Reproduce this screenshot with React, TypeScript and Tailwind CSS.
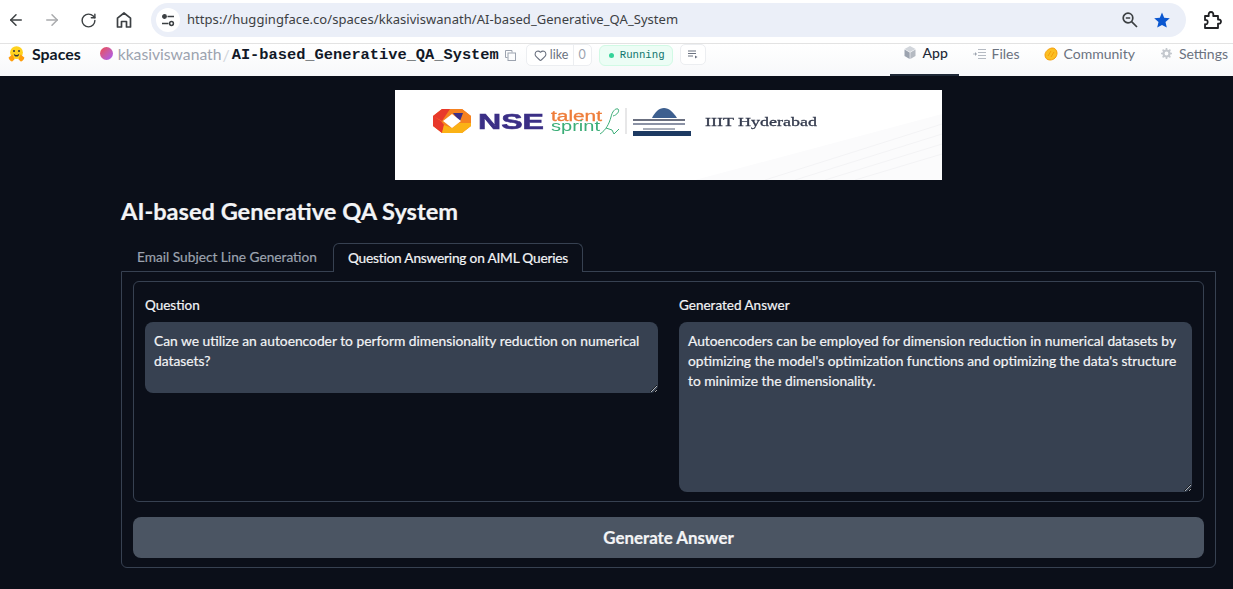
import React from "react";
import { ArrowLeft, ArrowRight, RotateCw, Heart } from "lucide-react";

const sans = "font-['Lato','Noto_Sans',sans-serif]";

function Home() {
  return (
    <svg width="18" height="18" viewBox="0 0 18 18" fill="none" stroke="#3c4043" strokeWidth="1.7">
      <path d="M2.5 16V7.2L9 2l6.5 5.2V16h-4v-5.500h-5V16z" strokeLinejoin="round" />
    </svg>
  );
}

function Tune() {
  return (
    <svg width="14" height="14" viewBox="0 0 14 14" fill="none" stroke="#3c4043" strokeWidth="1.5">
      <circle cx="3.500" cy="3.500" r="1.700" fill="#3c4043" />
      <path d="M6.500 3.500H13M1 10.500h6.500" />
      <circle cx="10.500" cy="10.500" r="1.900" />
    </svg>
  );
}

function HfLogo() {
  return (
    <svg width="17" height="17" viewBox="0 0 17 17">
      <circle cx="8.500" cy="7.600" r="6.400" fill="#ffd21e" />
      <circle cx="6" cy="6" r="1" fill="#32343d" />
      <circle cx="11" cy="6" r="1" fill="#32343d" />
      <path d="M5.800 8.800c1.500 1.600 3.900 1.600 5.400 0-.2 2-1.200 2.800-2.700 2.800s-2.500-.8-2.700-2.800z" fill="#32343d" />
      <path d="M.6 12.500l3.900-3 2.100 4.700-2.400 2.300c-1.300 0-3.400-2.100-3.600-4zM16.400 12.500l-3.900-3-2.100 4.700 2.400 2.300c1.300 0 3.400-2.100 3.600-4z" fill="#ff9d0b" />
    </svg>
  );
}

function Logo() {
  return (
    <svg width="547" height="90" viewBox="0 0 547 90" className="block blur-[0.35px]">
      <rect width="547" height="90" fill="#ffffff" />
      <path d="M300 90L547 24V90z" fill="#fbfbfc" />
      <path d="M400 90L547 44M430 90L547 54M460 90L547 64M370 90L547 34" stroke="#f3f3f5" strokeWidth="1" />
      <path d="M47 19h20l9 7v10l-9 7H47l-9-7V26z" fill="#f58220" />
      <path d="M38 26l9-7h8l-8 12z M38 26v10l9 7 2-8-3-4z" fill="#e8392b" />
      <path d="M57 19h10l9 7v3H62z" fill="#f58220" />
      <path d="M58 23h10l-3 8H64z" fill="#3b2f86" />
      <path d="M47 43h20l9-7v-3H64l-7 5-8-3z" fill="#fbb216" />
      <path d="M57 24l9 7-9 7-9-7z" fill="#ffffff" />
      <text x="83" y="39" fontFamily="'Liberation Sans',sans-serif" fontWeight="700" fontSize="22.500" stroke="#3b2f86" strokeWidth="0.6" fill="#3b2f86" textLength="66" lengthAdjust="spacingAndGlyphs">NSE</text>
      <text x="156" y="31" fontFamily="'Liberation Sans',sans-serif" fontSize="14" fill="#ee7d3a" stroke="#ee7d3a" strokeWidth="0.3" textLength="51" lengthAdjust="spacingAndGlyphs">talent</text>
      <text x="156" y="41" fontFamily="'Liberation Sans',sans-serif" fontSize="14" fill="#3cae78" textLength="49" lengthAdjust="spacingAndGlyphs">sprint</text>
      <path d="M205 44c6-4 9-10 11-17 1-5 4-9 7-8 2 2-1 6-5 7M211 38l6 2 2 4 5-5" fill="none" stroke="#3cae78" strokeWidth="1" />
      <path d="M231 18v26" stroke="#cfcfd1" strokeWidth="1" />
      <path d="M257 28c3-6 7-10 12-10s9 4 13 10z" fill="#3d5f8f" />
      <rect x="238" y="29" width="52" height="2" fill="#6b7080" />
      <rect x="238" y="33" width="52" height="2" fill="#8b92a5" />
      <rect x="248" y="38" width="32" height="2" fill="#a8adb9" />
      <rect x="238" y="41" width="58" height="5" fill="#1d3a62" />
      <text x="310" y="36" fontFamily="'Liberation Serif',serif" fontWeight="400" fontSize="13.500" stroke="#333a4d" strokeWidth="0.3" fill="#333a4d" textLength="112" lengthAdjust="spacingAndGlyphs">IIIT Hyderabad</text>
    </svg>
  );
}

function HfTab({ icon, label, active, className }: { icon: React.ReactNode; label: string; active?: boolean; className: string }) {
  return (
    <div className={`h-full flex items-center pb-[13px] ${active ? "border-b-2 border-[#1f2937] text-[#1f2937] font-medium" : "text-[#6b7280]"} ${className}`}>
      {icon}
      <span>{label}</span>
    </div>
  );
}

export default function App() {
  return (
    <div className={`w-[1233px] h-[589px] overflow-hidden flex flex-col bg-[#0b0f19] ${sans}`}>
      {/* browser bar */}
      <div className="h-[44px] shrink-0 bg-white border-b border-[#e3e3e3] flex items-center pb-[3px]">
        <div className="flex items-center w-[151px] pl-[7px] text-[#3c4043]">
          <ArrowLeft size={18} strokeWidth={2} />
          <ArrowRight size={18} strokeWidth={2} className="ml-[18px] text-[#a9abad]" />
          <RotateCw size={17} strokeWidth={2} className="ml-[19px]" />
          <span className="ml-[18px]"><Home /></span>
        </div>
        <div className="w-[1035px] h-[34px] rounded-full bg-[#ebeff8] flex items-center pl-[5px] pr-[15px]">
          <div className="w-[24px] h-[24px] rounded-full bg-white flex items-center justify-center mr-[7px]">
            <Tune />
          </div>
          <span className="text-[13px] tracking-[0.05px] text-[#3c4043] font-['Noto_Sans',sans-serif]">https://huggingface.co/spaces/kkasiviswanath/AI-based_Generative_QA_System</span>
          <div className="ml-auto flex items-center gap-[14px]">
            <svg width="18" height="18" viewBox="0 0 18 18" fill="none" stroke="#3c4043" strokeWidth="1.700">
              <circle cx="7" cy="7" r="4.800" />
              <path d="M4.800 7h4.400M10.600 10.600L16 16" />
            </svg>
            <svg width="18" height="18" viewBox="0 0 18 18"><path d="M9 1.500l2.200 5.200 5.600.5-4.300 3.700 1.300 5.500L9 13.900l-4.800 2.500 1.300-5.500L1.200 7.200l5.600-.5z" fill="#0b57d0" /></svg>
          </div>
        </div>
        <svg className="ml-[16px]" width="20" height="20" viewBox="0 0 20 20" fill="none" stroke="#202124" strokeWidth="1.800" strokeLinejoin="round">
          <path d="M3 6h3.800c-.6-2.600.5-4 2.200-4s2.800 1.400 2.200 4H16v3.600c2.200-.4 3 .8 3 2s-.8 2.400-3 2V18H3v-3.800c2 .4 2.700-.7 2.700-2.100S5 9.600 3 10z" />
        </svg>
      </div>

      {/* HF header */}
      <div className="h-[32px] shrink-0 bg-gradient-to-b from-white to-[#f7f8fa] flex items-start">
        <div className="ml-[8px] mt-[1px]"><HfLogo /></div>
        <span className="ml-[7px] h-[20px] leading-[20px] text-[15.9px] font-bold text-[#111827]">Spaces</span>
        <div className="ml-[19px] mt-[3px] w-[13px] h-[13px] rounded-full bg-gradient-to-br from-[#ef4444] to-[#a855f7]" />
        <span className="ml-[5px] h-[21px] leading-[21px] text-[15.700px] text-[#9ca3af]">kkasiviswanath</span>
        <span className="ml-[1px] h-[21px] leading-[21px] text-[16px] text-[#d1d5db]">/</span>
        <span className="ml-[2px] mt-[1px] h-[21px] leading-[21px] font-['Liberation_Mono',monospace] font-bold text-[15.350px] text-[#111827]">AI-based_Generative_QA_System</span>
        <svg className="ml-[6px] mt-[6px]" width="11" height="11" viewBox="0 0 11 11" fill="none" stroke="#9ca3af"><path d="M.5 .5h6.500v2M.5 .5v7h2" /><rect x="3" y="3" width="7.500" height="7.500" /></svg>
        <div className="ml-[10px] h-[22px] w-[66px] rounded-[5px] border border-[#eceef1] bg-white flex items-center text-[12.500px] text-[#6b7280]">
          <Heart size={13} className="ml-[7px]" />
          <span className="ml-[3px]">like</span>
          <span className="ml-auto h-full w-[18px] border-l border-[#eceef1] flex items-center justify-center text-[#9ca3af]">0</span>
        </div>
        <div className="ml-[7px] mt-[1px] h-[21px] w-[74px] rounded-[6px] border border-[#d1fae5] bg-[#ecfdf5] flex items-center font-['Liberation_Mono',monospace] text-[10.700px] text-[#0f766e]">
          <span className="ml-[9px] w-[5px] h-[5px] rounded-full bg-[#34d399]" />
          <span className="ml-[6px]">Running</span>
        </div>
        <div className="ml-[7px] h-[21px] w-[26px] rounded-[5px] border border-[#eceef1] bg-white flex items-center justify-center">
          <svg width="11" height="11" viewBox="0 0 11 11" fill="none" stroke="#6b7280" strokeWidth="1"><path d="M1 2h8M1 4.500h8M1 7h5" /><path d="M8 6.500l2.500 1.500L8 9.500z" fill="#6b7280" stroke="none" /></svg>
        </div>
        <div className="ml-auto h-full flex text-[14px]">
          <HfTab className="w-[69px] pl-[14px] gap-[7px]" active label="App" icon={<svg width="12" height="13" viewBox="0 0 12 13"><path d="M6 0l5.500 3L6 6 .5 3z" fill="#d1d5db" /><path d="M.5 3.500L5.700 6.500V13L.5 10z" fill="#9ca3af" /><path d="M11.500 3.500L6.300 6.500V13l5.200-3z" fill="#b5bac2" /></svg>} />
          <HfTab className="ml-[14px] gap-[6px]" label="Files" icon={<svg width="13" height="12" viewBox="0 0 13 12" fill="none" stroke="#b5bac2"><path d="M5 1.500h8M5 4.500h8M5 7.500h8M5 10.500h8" /><path d="M0 6h3" /><path d="M2 4l2 2-2 2z" fill="#9ca3af" stroke="none" /></svg>} />
          <HfTab className="ml-[24px] gap-[6px]" label="Community" icon={<svg width="14" height="14" viewBox="0 0 14 14"><path d="M1 8c0-3.500 3.500-6.500 7-7 2.500-.3 5 2 5 5 0 4-3 7-7 7-3 0-5-2-5-5z" fill="#fbbf24" stroke="#f59e0b" /><path d="M4 9l3-5M7 10l3-5" stroke="#f59e0b" /></svg>} />
          <HfTab className="ml-[26px] pr-[5px] gap-[7px]" label="Settings" icon={<svg width="11" height="11" viewBox="0 0 11 11"><circle cx="5.500" cy="5.500" r="3" fill="none" stroke="#c4c8ce" strokeWidth="2.200" /><path d="M5.500 0v2M5.500 9v2M0 5.500h2M9 5.500h2M1.600 1.600l1.400 1.400M8 8l1.400 1.400M9.400 1.600L8 3M3 8l-1.400 1.400" stroke="#c4c8ce" strokeWidth="1.600" /></svg>} />
        </div>
      </div>

      {/* main */}
      <div className="flex-1 flex flex-col pt-[14px] pl-[121px] pr-[17px] pb-[21px] text-[#f3f4f6] [-webkit-text-stroke:0.2px]">
        <div className="ml-[274px]"><Logo /></div>
        <h1 className="mt-[17px] h-[28px] leading-[28px] text-[23.600px] font-bold text-[#f3f4f6]">AI-based Generative QA System</h1>
        <div className="mt-[18px] h-[29px] flex text-[13.700px] relative z-10">
          <div className="w-[212px] h-[28px] leading-[28px] pl-[16px] text-[#9ca3af]">Email Subject Line Generation</div>
          <div className="w-[250px] h-[29px] leading-[28px] text-center tracking-[-0.2px] border border-b-0 border-[#374151] rounded-t-[6px] bg-[#0b0f19] text-[#f3f4f6]">Question Answering on AIML Queries</div>
        </div>
        <div className="-mt-[1px] flex-1 border border-[#374151] rounded-b-[6px] px-[11px] pt-[9px] pb-[9px] flex flex-col">
          <div className="h-[221px] shrink-0 border border-[#374151] rounded-[6px] px-[11px] pt-[14px] flex gap-[21px]">
            <label className="flex-1 block">
              <span className="block h-[18px] leading-[18px] text-[13.500px]">Question</span>
              <textarea
                readOnly
                className="mt-[8px] block w-full h-[71px] rounded-[8px] bg-[#374151] px-[9px] py-[9px] text-[13.800px] leading-[20px] text-[#f3f4f6] outline-none resize-y"
                defaultValue="Can we utilize an autoencoder to perform dimensionality reduction on numerical datasets?"
              />
            </label>
            <label className="flex-1 block">
              <span className="block h-[18px] leading-[18px] text-[13.500px]">Generated Answer</span>
              <textarea
                readOnly
                className="mt-[8px] block w-full h-[170px] rounded-[8px] bg-[#374151] px-[9px] py-[9px] text-[13.800px] leading-[20px] text-[#f3f4f6] outline-none resize-y"
                defaultValue="Autoencoders can be employed for dimension reduction in numerical datasets by optimizing the model's optimization functions and optimizing the data's structure to minimize the dimensionality."
              />
            </label>
          </div>
          <button className="mt-[15px] h-[41px] shrink-0 rounded-[8px] bg-[#4b5563] text-[16.900px] font-bold text-[#f3f4f6]">Generate Answer</button>
        </div>
      </div>
    </div>
  );
}
